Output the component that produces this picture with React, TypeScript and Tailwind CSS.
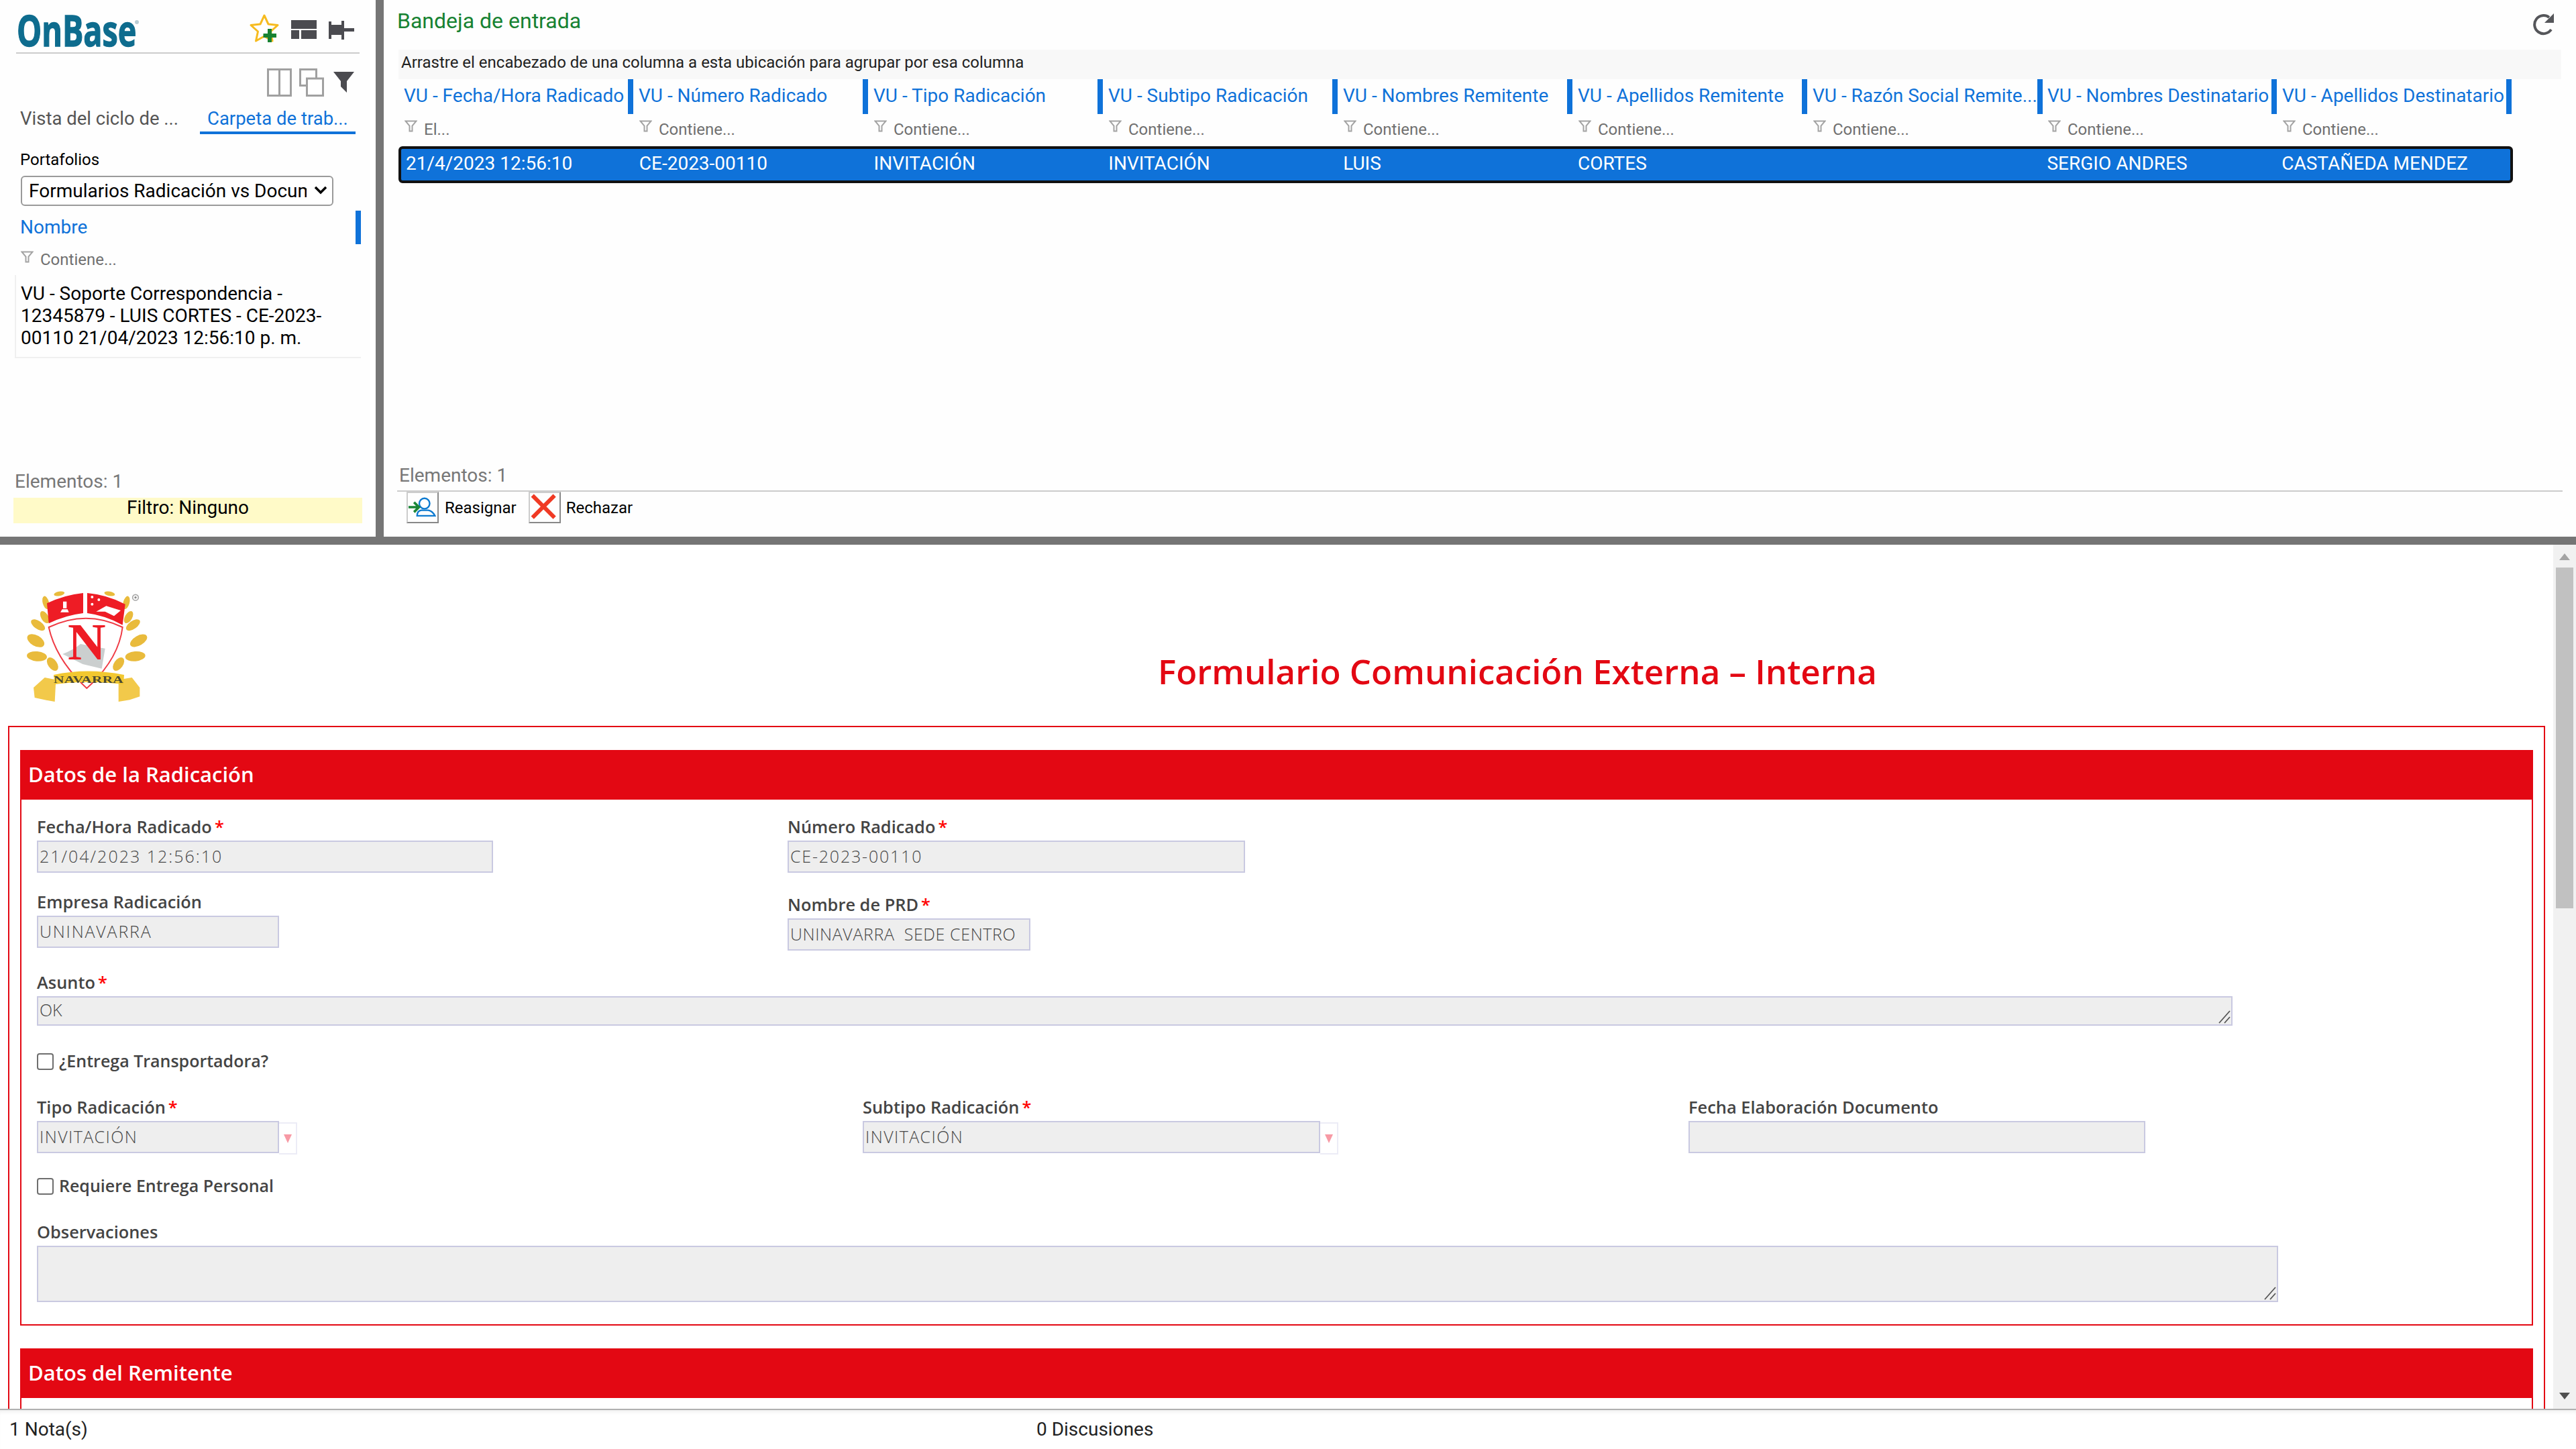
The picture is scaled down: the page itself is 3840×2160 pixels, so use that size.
import React from "react";

function Funnel({ className = "" }: { className?: string }) {
  return (
    <svg width="19" height="18" viewBox="0 0 19 18" className={className}>
      <path d="M1.5 1.5 H17.5 L11.5 8.5 V16.5 H7.5 V8.5 Z" fill="#fff" stroke="#a3a3a3" strokeWidth="2" />
    </svg>
  );
}

function FilterCell({ text }: { text: string }) {
  return (
    <div className="w-[350px] h-[48px] flex items-start pl-[9px] pt-[7px] text-[24px] text-[#707070]">
      <Funnel className="mt-[2px] mr-[10px] shrink-0" />
      <span className="mt-[3px] leading-[26px]">{text}</span>
    </div>
  );
}

function OnBaseLogo() {
  return (
    <div className="relative w-[200px] h-[60px] flex items-start">
      <span className="block origin-left scale-x-[0.73] text-[64px] leading-[60px] font-bold text-[#0e6c8e] font-['Open_Sans',sans-serif] whitespace-nowrap [-webkit-text-stroke:1.4px_#0e6c8e]">
        OnBase
      </span>
      <span className="absolute left-[176px] top-[15px] w-[6px] h-[6px] rounded-full bg-[#b9ccd4]" />
    </div>
  );
}

function StarPlus() {
  return (
    <svg width="46" height="44" viewBox="0 0 46 44">
      <path
        d="M23 3 L29 16 L43 17.5 L32.5 27 L35 41 L23 34 L10.5 41 L13.5 27 L3 17.5 L17 16 Z"
        fill="#fff"
        stroke="#f6bb1f"
        strokeWidth="3"
        strokeLinejoin="round"
      />
      <path d="M31 23 V43 M21.5 33 H41" stroke="#178232" strokeWidth="6" />
    </svg>
  );
}

function LayoutIcon() {
  return (
    <svg width="38" height="28" viewBox="0 0 38 28" fill="#4b4b50">
      <rect x="0" y="0" width="38" height="13" />
      <rect x="0" y="15" width="12" height="13" />
      <rect x="15" y="15" width="23" height="13" />
    </svg>
  );
}

function PinIcon() {
  return (
    <svg width="38" height="28" viewBox="0 0 38 28" fill="#4b4b50">
      <rect x="0" y="1" width="4" height="26" />
      <rect x="4" y="6" width="15" height="15" />
      <rect x="19" y="0" width="4" height="28" />
      <rect x="23" y="11" width="15" height="5" />
    </svg>
  );
}

function ColumnsIcon() {
  return (
    <svg width="37" height="42" viewBox="0 0 37 42" fill="#fff" stroke="#a0a0a0" strokeWidth="3">
      <rect x="1.5" y="1.5" width="34" height="39" />
      <path d="M18.5 1.5 V40.5" />
    </svg>
  );
}

function WindowsIcon() {
  return (
    <svg width="37" height="42" viewBox="0 0 37 42" fill="#fff" stroke="#a0a0a0" strokeWidth="3">
      <rect x="1.5" y="1.5" width="24" height="24" />
      <rect x="11.5" y="15" width="24" height="25.5" />
    </svg>
  );
}

function SolidFilter() {
  return (
    <svg width="31" height="31" viewBox="0 0 31 31" fill="#4b4b50">
      <path d="M0 0 H31 L20 14 V31 L11 22 V14 Z" />
    </svg>
  );
}

function Refresh() {
  return (
    <svg width="32" height="34" viewBox="0 0 32 34">
      <path d="M27 25 A13.5 13.5 0 1 1 24 7" fill="none" stroke="#55565a" strokeWidth="4" />
      <path d="M31 1 V15 H17 Z" fill="#55565a" />
    </svg>
  );
}

function ReassignIcon() {
  return (
    <svg width="48" height="47" viewBox="0 0 48 47" className="border-2 border-t-[#ccc] border-l-[#ccc] border-r-[#888] border-b-[#888]">
      <circle cx="27" cy="17" r="8.5" fill="#fff" stroke="#0d7ad0" strokeWidth="2.6" />
      <path d="M15 37 Q15 29 22 28 H33 Q40 29 44 37 Z" fill="#fff" stroke="#0d7ad0" strokeWidth="2.6" />
      <path d="M1 23 H16 M10 15 L18 23 L10 31" fill="none" stroke="#1a8536" strokeWidth="4" />
    </svg>
  );
}

function RejectIcon() {
  return (
    <svg width="48" height="47" viewBox="0 0 48 47" className="border-2 border-t-[#ccc] border-l-[#ccc] border-r-[#888] border-b-[#888]">
      <path d="M4 4 L40 40 M40 4 L4 40" stroke="#f03a24" strokeWidth="6.5" />
    </svg>
  );
}

function Crest() {
  const gold = "#e9bb3c";
  const leaves: [number, number, number, number, number][] = [
    [160, 345, 42, 24, 30],
    [165, 415, 45, 22, 5],
    [170, 275, 36, 18, 35],
    [200, 240, 30, 16, 60],
    [205, 175, 30, 14, 75],
    [265, 135, 24, 10, -10],
    [235, 450, 34, 20, 55],
    [620, 345, 42, 22, -30],
    [605, 415, 45, 22, -5],
    [595, 275, 36, 18, -35],
    [575, 240, 30, 16, -60],
    [565, 175, 30, 14, -75],
    [490, 135, 24, 10, 10],
    [530, 450, 34, 20, -55],
  ];
  return (
    <svg width="300" height="240" viewBox="0 0 900 720" className="shrink-0 blur-[0.5px]">
      {leaves.map(([cx, cy, rx, ry, r], i) => (
        <ellipse key={i} cx={cx} cy={cy} rx={rx} ry={ry} fill={gold} transform={`rotate(${r} ${cx} ${cy})`} />
      ))}
      <path d="M218 285 Q385 205 548 285 Q530 430 388 558 Q250 430 218 285 Z" fill="#fff" stroke="#ef3b45" strokeWidth="6" />
      <path d="M210 178 Q290 140 372 132 L372 222 Q290 232 218 268 Z" fill="#ee1c25" />
      <path d="M390 132 Q480 140 560 182 L548 275 Q470 232 390 222 Z" fill="#ee1c25" />
      <path d="M282 170 H298 V200 H282 Z M270 218 H308 L302 205 H278 Z" fill="#fff" />
      <path d="M430 215 L475 190 L540 210 L510 235 L470 215 Z" fill="#fff" />
      <circle cx="412" cy="150" r="6" fill="#fff" />
      <circle cx="442" cy="162" r="6" fill="#fff" />
      <circle cx="412" cy="182" r="6" fill="#fff" />
      <path d="M280 405 Q330 385 360 360 L470 380 L455 470 L370 450 Z" fill="#cbcfcf" />
      <text x="388" y="428" textAnchor="middle" fontFamily="'Liberation Serif', serif" fontWeight="700" fontSize="235" fill="#ee1c25">
        N
      </text>
      <path d="M150 555 L200 510 L250 520 L245 618 L200 610 L155 600 Z" fill="#f2c94a" />
      <path d="M625 555 L590 510 L530 520 L530 618 L580 610 L625 595 Z" fill="#f2c94a" />
      <path d="M240 498 Q390 465 555 498 L552 540 Q390 520 245 540 Z" fill="#f2c830" />
      <text
        x="240"
        y="535"
        fontFamily="'Liberation Serif', serif"
        fontWeight="700"
        fontSize="46"
        fill="#4a4a33"
        textLength="312"
        lengthAdjust="spacingAndGlyphs"
      >
        NAVARRA
      </text>
      <circle cx="606" cy="152" r="13" fill="#fff" stroke="#a8a8a8" strokeWidth="5" />
      <circle cx="606" cy="152" r="5" fill="#888" />
    </svg>
  );
}

function Label({ text, required = false }: { text: string; required?: boolean }) {
  return (
    <div className="h-[30px] mb-[6px] flex items-center text-[25.4px] font-semibold text-[#444] whitespace-nowrap">
      {text}
      {required && <span className="text-[#ff0000] ml-[4px]">*</span>}
    </div>
  );
}

const inputCls =
  "block bg-[#eeeeee] border-2 border-[#c9c9e1] pl-[2px] text-[25px] font-light text-[#484848] outline-none";

function Field({
  label,
  value,
  required,
  className = "",
  inputClass,
}: {
  label: string;
  value: string;
  required?: boolean;
  className?: string;
  inputClass: string;
}) {
  return (
    <div className={className}>
      <Label text={label} required={required} />
      <input readOnly value={value} className={`${inputCls} h-[48px] pb-[2px] ${inputClass}`} />
    </div>
  );
}

function DropField({ label, value, required, wide }: { label: string; value: string; required?: boolean; wide?: boolean }) {
  return (
    <div>
      <Label text={label} required={required} />
      <div className="flex items-start">
        <input readOnly value={value} className={`${inputCls} h-[48px] pb-[2px] tracking-[1.4px] ${wide ? "w-[682px]" : "w-[361px]"}`} />
        <div className="w-[27px] h-[48px] mt-[2px] border-2 border-l-0 border-[#ececf6] flex items-center justify-center">
          <svg width="12" height="13" viewBox="0 0 12 13">
            <path d="M0 0 H12 L6 13 Z" fill="#f79aa5" />
          </svg>
        </div>
      </div>
    </div>
  );
}

function Check({ label, className = "" }: { label: string; className?: string }) {
  return (
    <label className={`h-[30px] flex items-center text-[25px] font-semibold text-[#444] ${className}`}>
      <input type="checkbox" className="appearance-none w-[25px] h-[25px] mr-[8px] bg-white border-2 border-[#6e6e6e] rounded-[4px]" />
      {label}
    </label>
  );
}

function Grip() {
  return (
    <svg width="18" height="20" viewBox="0 0 18 20" className="absolute right-[3px] bottom-[3px]">
      <path d="M1 19 L17 1 M9 19 L17 10" stroke="#555" strokeWidth="1.8" fill="none" />
    </svg>
  );
}

function Area({ value, className }: { value: string; className: string }) {
  return (
    <div className={`relative ${className}`}>
      <textarea readOnly value={value} className={`${inputCls} w-full h-full resize-none pt-[2px] leading-[32px]`} />
      <Grip />
    </div>
  );
}

const columns = [
  ["VU - Fecha/Hora Radicado", "El...", "21/4/2023 12:56:10"],
  ["VU - Número Radicado", "Contiene...", "CE-2023-00110"],
  ["VU - Tipo Radicación", "Contiene...", "INVITACIÓN"],
  ["VU - Subtipo Radicación", "Contiene...", "INVITACIÓN"],
  ["VU - Nombres Remitente", "Contiene...", "LUIS"],
  ["VU - Apellidos Remitente", "Contiene...", "CORTES"],
  ["VU - Razón Social Remite...", "Contiene...", ""],
  ["VU - Nombres Destinatario", "Contiene...", "SERGIO ANDRES"],
  ["VU - Apellidos Destinatario", "Contiene...", "CASTAÑEDA MENDEZ"],
];

function Sidebar() {
  return (
    <div className="w-[560px] h-full flex flex-col">
      <div className="h-[78px] ml-[24px] mr-[24px] flex items-start relative">
        <div className="mt-[15px] ml-[1px]">
          <OnBaseLogo />
        </div>
        <div className="ml-auto flex items-start">
          <div className="mt-[20px]"><StarPlus /></div>
          <div className="mt-[30px] ml-[17px]"><LayoutIcon /></div>
          <div className="mt-[31px] ml-[18px] mr-[8px]"><PinIcon /></div>
        </div>
      </div>
      <div className="h-[2px] mx-[24px] bg-[#cccccc]" />
      <div className="h-[36px] mt-[22px] mr-[32px] flex justify-end items-start gap-[11px]">
        <ColumnsIcon />
        <WindowsIcon />
        <div className="mt-[5px] ml-[3px]"><SolidFilter /></div>
      </div>
      <div className="h-[50px] mt-[12px] ml-[30px] flex text-[27.5px] leading-[34px]">
        <div className="w-[268px] pt-[10px] text-[#555] whitespace-nowrap">Vista del ciclo de ...</div>
        <div className="w-[232px] pl-[11px] pt-[10px] text-[#0f72d9] border-b-4 border-[#0f72d9] whitespace-nowrap">Carpeta de trab...</div>
      </div>
      <div className="h-[30px] mt-[23px] ml-[30px] flex items-center text-[24px] text-black">Portafolios</div>
      <div className="relative w-[466px] h-[45px] mt-[9px] ml-[31px]">
        <select className="appearance-none w-full h-full pl-[10px] pr-[38px] border-2 border-[#9a9a9a] rounded-[6px] bg-white text-[28px] text-black">
          <option>Formularios Radicación vs Documentos</option>
        </select>
        <svg width="20" height="14" viewBox="0 0 20 14" className="absolute right-[9px] top-[15px]">
          <path d="M2 2 L10 10 L18 2" fill="none" stroke="#000" strokeWidth="3.5" />
        </svg>
      </div>
      <div className="h-[50px] mt-[7px] ml-[30px] mr-[22px] flex items-center justify-between text-[#0f72d9] text-[28px]">
        <span>Nombre</span>
        <div className="w-[8px] h-full bg-[#0f72d9]" />
      </div>
      <div className="h-[38px] ml-[31px] mt-[8px] flex items-start text-[24px] text-[#707070]">
        <Funnel className="mt-[2px] mr-[10px]" />
        <span className="mt-[2px] leading-[26px]">Contiene...</span>
      </div>
      <div className="h-[124px] ml-[22px] mr-[22px] pl-[7px] pt-[11px] border-l-2 border-b-2 border-[#f0f0f0] text-[28px] leading-[33px] text-black">
        <div className="w-[480px]">VU - Soporte Correspondencia - 12345879 - LUIS CORTES - CE-2023-00110 21/04/2023 12:56:10 p. m.</div>
      </div>
      <div className="h-[34px] mt-[167px] ml-[22px] flex items-center text-[28px] text-[#777]">Elementos: 1</div>
      <div className="h-[38px] mt-[7px] mx-[20px] bg-[#fffac8] text-center text-[28px] leading-[30px] text-black">Filtro: Ninguno</div>
    </div>
  );
}

function Inbox() {
  return (
    <div className="flex-1 h-full flex flex-col pl-[22px]">
      <div className="h-[74px] flex items-start justify-between">
        <div className="-ml-[2px] mt-[13px] text-[32px] leading-[36px] text-[#178232]">Bandeja de entrada</div>
        <div className="mt-[19px] mr-[32px]"><Refresh /></div>
      </div>
      <div className="h-[44px] w-[3224px] bg-[#f8f8f8] pl-[4px] pb-[6px] flex items-center text-[24px] text-[#222]">
        Arrastre el encabezado de una columna a esta ubicación para agrupar por esa columna
      </div>
      <div className="flex">
        {columns.map(([h]) => (
          <div key={h} className="w-[350px] h-[52px] flex items-start justify-between pl-[8px] text-[28px] text-[#0f72d9]">
            <span className="mt-[9px] leading-[32px] whitespace-nowrap">{h}</span>
            <div className="w-[8px] h-full bg-[#0f72d9] shrink-0" />
          </div>
        ))}
      </div>
      <div className="flex">
        {columns.map(([h, f]) => (
          <FilterCell key={h} text={f} />
        ))}
      </div>
      <div className="w-[3152px] h-[55px] flex items-center rounded-[6px] border-4 border-[#111] bg-[#0f72d9] text-white text-[28px]">
        {columns.map(([h, , v], i) => (
          <div key={h} className={`h-full pb-[4px] flex items-center whitespace-nowrap ${i === 0 ? "w-[346px] pl-[7px]" : "w-[350px] pl-[9px]"}`}>
            {v}
          </div>
        ))}
      </div>
      <div className="h-[34px] mt-[419px] pl-[1px] flex items-center text-[28px] text-[#777]">Elementos: 1</div>
      <div className="h-[2px] mt-[5px] mr-[20px] -ml-[2px] bg-[#cccccc]" />
      <div className="flex items-center h-[47px] pl-[12px] text-[24px] text-black">
        <ReassignIcon />
        <span className="ml-[9px]">Reasignar</span>
        <div className="ml-[18px]"><RejectIcon /></div>
        <span className="ml-[8px]">Rechazar</span>
      </div>
    </div>
  );
}

function SectionHeader({ title }: { title: string }) {
  return (
    <div className="h-[74px] bg-[#e30813] pl-[12px] pb-[2px] flex items-center text-[31px] font-semibold text-white">{title}</div>
  );
}

function Form() {
  return (
    <div className="flex-1 h-full flex flex-col overflow-hidden font-['Open_Sans',sans-serif]">
      <div className="flex items-start h-[270px] shrink-0 pt-[28px]">
        <Crest />
        <div className="ml-[1426px] mt-[125px] text-[51px] leading-[70px] font-semibold text-[#e30813] whitespace-nowrap">
          Formulario Comunicación Externa – Interna
        </div>
      </div>
      <div className="ml-[12px] w-[3782px] flex-1 border-2 border-b-0 border-[#e30813] pt-[34px] px-[16px]">
        <SectionHeader title="Datos de la Radicación" />
        <div className="border-2 border-t-0 border-[#e30813] px-[23px] pt-[25px] h-[784px]">
          <div className="grid grid-cols-[1119px_1fr]">
            <div>
              <Field label="Fecha/Hora Radicado" value="21/04/2023 12:56:10" required inputClass="w-[680px] tracking-[2px]" />
              <Field label="Empresa Radicación" value="UNINAVARRA" className="mt-[28px]" inputClass="w-[361px] tracking-[1.8px]" />
            </div>
            <div>
              <Field label="Número Radicado" value="CE-2023-00110" required inputClass="w-[682px] tracking-[1.8px]" />
              <Field label="Nombre de PRD" value="UNINAVARRA  SEDE CENTRO" required className="mt-[32px]" inputClass="w-[362px] tracking-[0.6px]" />
            </div>
          </div>
          <div className="mt-[32px]">
            <Label text="Asunto" required />
            <Area value="OK" className="w-[3273px] h-[44px]" />
          </div>
          <Check label="¿Entrega Transportadora?" className="mt-[38px]" />
          <div className="grid grid-cols-[1231px_1231px_1fr] mt-[38px]">
            <DropField label="Tipo Radicación" value="INVITACIÓN" required />
            <DropField label="Subtipo Radicación" value="INVITACIÓN" required wide />
            <Field label="Fecha Elaboración Documento" value="" inputClass="w-[681px]" />
          </div>
          <Check label="Requiere Entrega Personal" className="mt-[32px]" />
          <div className="mt-[38px]">
            <Label text="Observaciones" />
            <Area value="" className="w-[3341px] h-[84px]" />
          </div>
        </div>
        <div className="mt-[34px]">
          <SectionHeader title="Datos del Remitente" />
          <div className="h-[30px] border-x-2 border-[#e30813]" />
        </div>
      </div>
    </div>
  );
}

function Scrollbar() {
  return (
    <div className="w-[34px] h-full bg-[#f1f1f1] flex flex-col items-center pt-[13px]">
      <svg width="16" height="10" viewBox="0 0 16 10">
        <path d="M8 0 L16 10 H0 Z" fill="#a3a3a3" />
      </svg>
      <div className="w-[26px] h-[508px] mt-[11px] bg-[#c1c1c1]" />
      <svg width="16" height="10" viewBox="0 0 16 10" className="mt-auto mb-[14px]">
        <path d="M0 0 H16 L8 10 Z" fill="#505050" />
      </svg>
    </div>
  );
}

export default function App() {
  return (
    <div className="w-[3840px] h-[2160px] flex flex-col bg-white overflow-hidden font-[Roboto,sans-serif]">
      <div className="h-[800px] shrink-0 flex bg-[#fefefe]">
        <Sidebar />
        <div className="w-[12px] h-full bg-[#757575] shrink-0" />
        <Inbox />
      </div>
      <div className="h-[12px] shrink-0 bg-[#757575]" />
      <div className="h-[1288px] shrink-0 flex">
        <Form />
        <Scrollbar />
      </div>
      <div className="h-[60px] shrink-0 border-t-2 border-[#b0b0b0] shadow-[inset_0_6px_6px_-4px_rgba(0,0,0,0.08)] flex items-center text-[28px] leading-[32px] text-[#222]">
        <div className="w-[1545px] pl-[14px]">1 Nota(s)</div>
        <div>0 Discusiones</div>
      </div>
    </div>
  );
}
